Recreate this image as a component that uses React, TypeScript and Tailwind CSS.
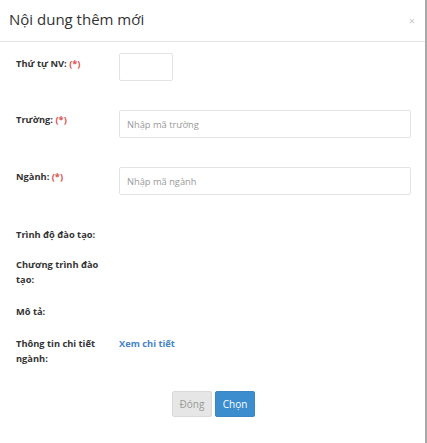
import React from "react";

const Req = () => <span className="text-[#d9534f]">(*)</span>;

export default function App() {
  return (
    <div className="w-[427px] h-[443px] bg-white border-r-2 border-[#a9a9a9] font-['Open_Sans',sans-serif] text-[#333]">
      <div className="h-[42px] border-b border-[#e5e5e5] flex items-center justify-between pl-[9px] pr-[10px]">
        <h4 className="text-[15px] leading-none text-[#333] pb-[2px]">Nội dung thêm mới</h4>
        <span className="text-[11px] leading-none text-[#c8c8c8]">×</span>
      </div>

      <div className="pl-4 pr-[14px] pt-[11px] text-[9.3px] leading-[15px]">
        <div className="grid grid-cols-[103px_1fr] mb-[29px]">
          <label className="font-bold pt-[3px]">Thứ tự NV: <Req /></label>
          <input className="w-[54px] h-[28px] border border-[#e3e3e3] rounded-[2px]" />
        </div>
        <div className="grid grid-cols-[103px_1fr] mb-[29px]">
          <label className="font-bold pt-[2px]">Trường: <Req /></label>
          <input
            placeholder="Nhập mã trường"
            className="h-[28px] border border-[#e3e3e3] rounded-[2px] px-[7px] text-[9.3px] placeholder:text-[#999] outline-none"
          />
        </div>
        <div className="grid grid-cols-[103px_1fr] mb-[32px]">
          <label className="font-bold pt-[2px]">Ngành: <Req /></label>
          <input
            placeholder="Nhập mã ngành"
            className="h-[28px] border border-[#e3e3e3] rounded-[2px] px-[7px] text-[9.3px] placeholder:text-[#999] outline-none"
          />
        </div>

        <div className="grid grid-cols-[103px_1fr] mb-[15px]">
          <label className="font-bold">Trình độ đào tạo:</label>
          <div />
        </div>
        <div className="grid grid-cols-[103px_1fr] mb-[17px]">
          <label className="font-bold pr-[2px]">Chương trình đào tạo:</label>
          <div />
        </div>
        <div className="grid grid-cols-[103px_1fr] mb-[17px]">
          <label className="font-bold">Mô tả:</label>
          <div />
        </div>
        <div className="grid grid-cols-[103px_1fr]">
          <label className="font-bold pr-[2px]">Thông tin chi tiết ngành:</label>
          <a className="font-bold text-[#4583c4]">Xem chi tiết</a>
        </div>

        <div className="flex justify-center gap-[3px] mt-[25px]">
          <button className="w-[40px] h-[26px] bg-[#e6e6e6] border border-[#d9d9d9] rounded-[2px] text-[10px] text-[#999]">
            Đóng
          </button>
          <button className="w-[40px] h-[26px] bg-[#3c8dcd] border border-[#3a85c2] rounded-[2px] text-[10px] text-white">
            Chọn
          </button>
        </div>
      </div>
    </div>
  );
}
